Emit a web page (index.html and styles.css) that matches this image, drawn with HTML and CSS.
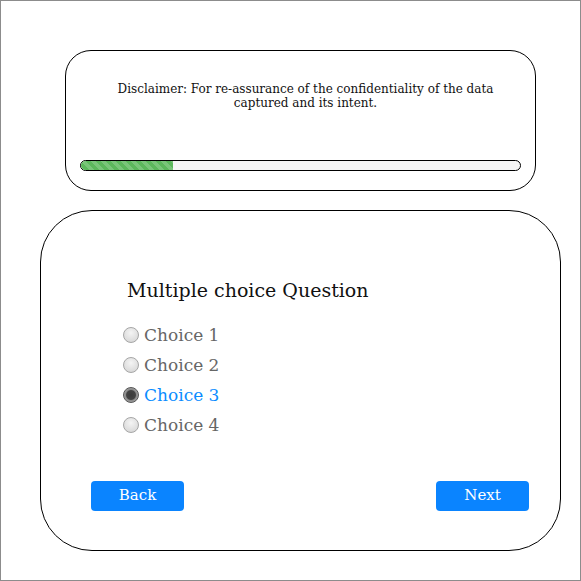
FILE: index.html
```html
<!DOCTYPE html>
<html>
<head>
<meta charset="utf-8">
<link rel="stylesheet" href="styles.css">
</head>
<body>
<div class="frame">
  <section class="card top-card">
    <p class="disclaimer">Disclaimer: For re-assurance of the confidentiality of the data captured and its intent.</p>
    <div class="progress"><div class="progress-fill" style="width:21%"></div></div>
  </section>
  <section class="card question-card">
    <h2 class="question">Multiple choice Question</h2>
    <ul class="choices">
      <li class="choice"><span class="radio"></span><span>Choice 1</span></li>
      <li class="choice"><span class="radio"></span><span>Choice 2</span></li>
      <li class="choice selected"><span class="radio"></span><span>Choice 3</span></li>
      <li class="choice"><span class="radio"></span><span>Choice 4</span></li>
    </ul>
    <div class="actions">
      <button class="btn">Back</button>
      <button class="btn">Next</button>
    </div>
  </section>
</div>
</body>
</html>
```

FILE: styles.css
```css
html, body {
  margin: 0;
  padding: 0;
  background: #fff;
}
.frame {
  width: 581px;
  height: 581px;
  box-sizing: border-box;
  border: 1px solid #8c8c8c;
  padding-top: 49px;
  font-family: "DejaVu Serif", serif;
  display: flex;
  flex-direction: column;
  align-items: flex-start;
}
.card {
  box-sizing: border-box;
  border: 1px solid #000;
  background: #fff;
}
.top-card {
  width: 471px;
  height: 141px;
  margin-left: 64px;
  border-radius: 26px;
  padding: 31px 14px 0 14px;
}
.disclaimer {
  margin: 0 0 0 10px;
  font-size: 12px;
  line-height: 14px;
  text-align: center;
  color: #111;
  height: 78px;
}
.progress {
  height: 11px;
  box-sizing: border-box;
  border: 1px solid #000;
  border-radius: 6px;
  background: #f5f5f5;
  overflow: hidden;
}
.progress-fill {
  height: 100%;
  background-color: #5cb85c;
  background-image: linear-gradient(45deg, rgba(255,255,255,.18) 25%, transparent 25%, transparent 50%, rgba(255,255,255,.18) 50%, rgba(255,255,255,.18) 75%, transparent 75%, transparent);
  background-size: 10px 10px;
}
.question-card {
  width: 521px;
  height: 341px;
  margin-left: 39px;
  margin-top: 19px;
  border-radius: 52px;
  padding: 68px 31px 0 50px;
}
.question {
  margin: 0 0 0 36px;
  font-size: 19px;
  font-weight: normal;
  line-height: 22px;
  color: #111;
}
.choices {
  list-style: none;
  margin: 19px 0 0 32px;
  padding: 0;
}
.choice {
  display: flex;
  align-items: center;
  height: 30px;
  font-size: 17px;
  color: #666;
}
.choice .radio {
  width: 16px;
  height: 16px;
  box-sizing: border-box;
  border-radius: 50%;
  border: 1px solid #a6a6a6;
  background: radial-gradient(circle at 50% 35%, #f4f4f4 0%, #dcdcdc 70%, #cfcfcf 100%);
  margin-right: 5px;
  flex: none;
}
.choice.selected {
  color: #0a8cff;
}
.choice.selected .radio {
  background: radial-gradient(circle, #3a3a3a 0%, #444 45%, #8a8a8a 55%, #c8c8c8 100%);
  border-color: #555;
}
.actions {
  display: flex;
  justify-content: space-between;
  margin-top: 41px;
}
.btn {
  width: 93px;
  height: 30px;
  border: none;
  border-radius: 4px;
  background: #0a84ff;
  color: #fff;
  font-family: "DejaVu Serif", serif;
  font-size: 15px;
  padding: 0 0 3px 0;
}
```
